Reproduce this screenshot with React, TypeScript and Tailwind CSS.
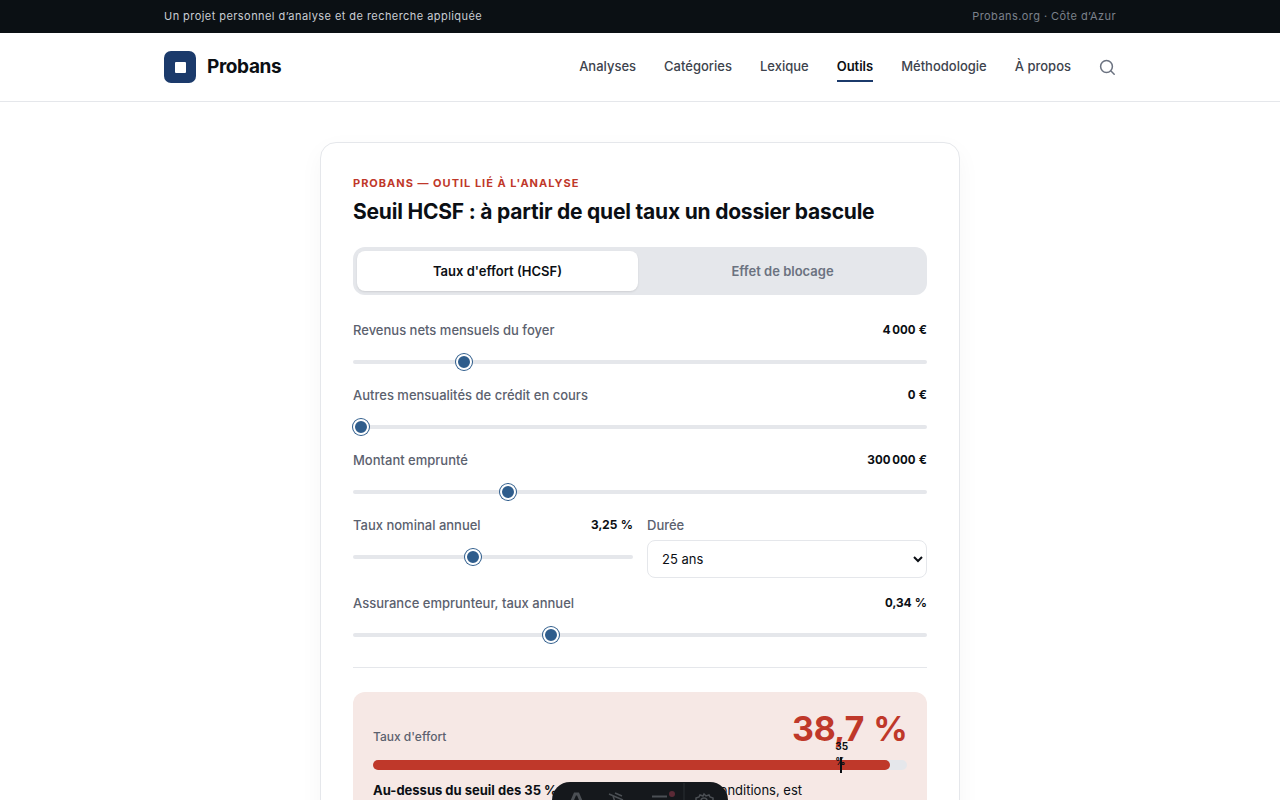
import { useState } from "react";

const NAV_LINKS = [
  { label: "Analyses", active: false },
  { label: "Catégories", active: false },
  { label: "Lexique", active: false },
  { label: "Outils", active: true },
  { label: "Méthodologie", active: false },
  { label: "À propos", active: false },
];

const RANGE_CLASS =
  "block h-5 w-full cursor-pointer appearance-none bg-transparent " +
  "[&::-webkit-slider-runnable-track]:h-1 [&::-webkit-slider-runnable-track]:rounded-full [&::-webkit-slider-runnable-track]:bg-[#e5e7eb] " +
  "[&::-webkit-slider-thumb]:-mt-[6px] [&::-webkit-slider-thumb]:size-4 [&::-webkit-slider-thumb]:appearance-none [&::-webkit-slider-thumb]:rounded-full [&::-webkit-slider-thumb]:border-2 [&::-webkit-slider-thumb]:border-white [&::-webkit-slider-thumb]:bg-[#2f5d8c] [&::-webkit-slider-thumb]:shadow-[0_0_0_1px_#2f5d8c]";

function formatEuros(value: number) {
  return `${String(value).replace(/\B(?=(\d{3})+$)/g, "\u202f")}\u00a0€`;
}

function formatPercent(value: number) {
  return `${value.toFixed(2).replace(".", ",")} %`;
}

type SliderFieldProps = {
  id: string;
  label: string;
  min: number;
  max: number;
  step: number;
  initial: number;
  format: (value: number) => string;
};

function SliderField({ id, label, min, max, step, initial, format }: SliderFieldProps) {
  const [value, setValue] = useState(initial);
  return (
    <div>
      <div className="mb-3 flex h-5 items-center justify-between leading-5">
        <label htmlFor={id} className="text-[13px] font-medium text-[#5b616e]">
          {label}
        </label>
        <output htmlFor={id} className="text-[12px] font-bold text-[#0b0f14] tabular-nums">
          {format(value)}
        </output>
      </div>
      <input
        id={id}
        type="range"
        min={min}
        max={max}
        step={step}
        value={value}
        onChange={(event) => setValue(Number(event.target.value))}
        className={RANGE_CLASS}
      />
    </div>
  );
}

function TopBar() {
  return (
    <div className="bg-[#0b1014] text-[11px] tracking-[0.04em]">
      <div className="mx-auto flex h-[33px] max-w-[1000px] items-center justify-between px-6">
        <span className="text-[#c9cdd3]">Un projet personnel d’analyse et de recherche appliquée</span>
        <span className="text-[#7b818b]">Probans.org · Côte d’Azur</span>
      </div>
    </div>
  );
}

function Header() {
  return (
    <header className="border-b border-[#e5e7eb] bg-white">
      <div className="mx-auto flex h-[68px] max-w-[1000px] items-center justify-between px-6">
        <a href="#" className="flex items-center gap-[11px]">
          <span className="flex size-8 items-center justify-center rounded-[7px] bg-[#1b3a6b]">
            <span className="size-[11px] rounded-[1px] bg-white" />
          </span>
          <span className="text-[19px] font-bold tracking-[-0.02em] text-[#0b0f14]">Probans</span>
        </a>
        <nav className="flex items-center gap-7 text-[13px]">
          {NAV_LINKS.map(({ label, active }) => (
            <a
              key={label}
              href="#"
              className={
                active
                  ? "border-b-2 border-[#1b3a6b] pt-[5px] pb-[3px] font-semibold text-[#0b0f14]"
                  : "border-b-2 border-transparent pt-[5px] pb-[3px] font-medium text-[#3d434d]"
              }
            >
              {label}
            </a>
          ))}
          <button type="button" aria-label="Rechercher" className="text-[#6b7280]">
            <svg width="17" height="17" viewBox="0 0 17 17" fill="none" stroke="currentColor" strokeWidth="1.5" strokeLinecap="round">
              <circle cx="7.5" cy="7.5" r="5.9" />
              <path d="M12 12l3.2 3.2" />
            </svg>
          </button>
        </nav>
      </div>
    </header>
  );
}

function ModeTabs() {
  const [mode, setMode] = useState("effort");
  const tabs = [
    { id: "effort", label: "Taux d'effort (HCSF)" },
    { id: "blocage", label: "Effet de blocage" },
  ];
  return (
    <div role="tablist" className="mt-[22px] flex gap-1 rounded-xl bg-[#e5e7eb] p-1">
      {tabs.map(({ id, label }) => (
        <button
          key={id}
          type="button"
          role="tab"
          aria-selected={mode === id}
          onClick={() => setMode(id)}
          className={
            mode === id
              ? "h-10 flex-1 rounded-lg bg-white pt-0.5 text-[13px] font-semibold text-[#0b0f14] shadow-[0_1px_2px_rgba(0,0,0,0.1)]"
              : "h-10 flex-1 rounded-lg pt-0.5 text-[13px] font-semibold text-[#6b7280]"
          }
        >
          {label}
        </button>
      ))}
    </div>
  );
}

function EffortResult() {
  return (
    <section className="mt-6 rounded-xl bg-[#f6e8e5] px-5 pt-4 pb-5">
      <div className="flex items-baseline justify-between">
        <span className="text-[12px] font-medium text-[#5b616e]">Taux d'effort</span>
        <span className="text-[34px] leading-[42px] font-bold tracking-[-0.02em] text-[#bf382a] tabular-nums">38,7 %</span>
      </div>
      <div className="relative mt-[10px] h-[10px] rounded-full bg-[#e5e7eb]">
        <div className="h-full rounded-full bg-[#bf382a]" style={{ width: "96.75%" }} />
        <div className="absolute -top-[3px] left-[87.5%] h-4 w-[2px] bg-[#0b0f14]">
          <span className="absolute -top-[18px] -left-[5px] w-3 text-[10px] leading-[15px] font-bold text-[#0b0f14]">
            35 %
          </span>
        </div>
      </div>
      <p className="mt-[10px] text-[13px] leading-5 text-[#0b0f14]">
        <strong className="font-bold">Au-dessus du seuil des 35 %.</strong> Votre dossier, dans ces conditions, est
      </p>
    </section>
  );
}

function FloatingToolbar() {
  return (
    <div className="fixed bottom-0 left-1/2 h-[18px] w-44 -translate-x-1/2 overflow-hidden rounded-t-[20px] bg-[#15181c]">
      <svg width="176" height="18" viewBox="0 0 176 18" fill="none" stroke="#4b4f54" strokeWidth="1.5">
        <path d="M20 19l3-7h3l3 7" strokeWidth="3" />
        <path d="M57 12l14 6M63 11l7 3M61 14l2 6" />
        <path d="M100 14.500h15" strokeWidth="2" />
        <circle cx="120" cy="12" r="3" fill="#5b2a36" stroke="none" />
        <path d="M132 1v17" stroke="#2b2f33" strokeWidth="1" />
        <path d="M144 19v-3l3-1 1-2 3 1 1-2 2 2 3-1 1 2 3 1v3" />
        <path d="M149 19a3 3 0 0 1 6 0" />
      </svg>
    </div>
  );
}

export default function App() {
  return (
    <div className="min-h-screen bg-white font-[Inter,sans-serif] text-[#0b0f14]">
      <TopBar />
      <Header />
      <main className="px-6 pt-10 pb-10">
        <article className="mx-auto max-w-[640px] rounded-2xl border border-[#e5e7eb] bg-white px-8 pt-8 pb-8 shadow-[0_8px_24px_rgba(11,15,20,0.04)]">
          <p className="text-[11px] leading-4 font-bold tracking-[1px] text-[#bf382a] uppercase">
            Probans — Outil lié à l'analyse
          </p>
          <h1 className="mt-2 text-[21px] leading-[26px] font-bold tracking-[-0.01em]">
            Seuil HCSF : à partir de quel taux un dossier bascule
          </h1>
          <ModeTabs />
          <div className="mt-[25px] grid gap-[13px]">
            <SliderField id="revenus" label="Revenus nets mensuels du foyer" min={1500} max={15000} step={100} initial={4000} format={formatEuros} />
            <SliderField id="mensualites" label="Autres mensualités de crédit en cours" min={0} max={3000} step={50} initial={0} format={formatEuros} />
            <SliderField id="montant" label="Montant emprunté" min={50000} max={1000000} step={5000} initial={300000} format={formatEuros} />
            <div className="grid grid-cols-2 gap-[14px] pb-0.5">
              <SliderField id="taux" label="Taux nominal annuel" min={0.5} max={7} step={0.05} initial={3.25} format={formatPercent} />
              <div>
                <label htmlFor="duree" className="mb-[5px] block text-[13px] leading-5 font-medium text-[#5b616e]">
                  Durée
                </label>
                <select
                  id="duree"
                  defaultValue="25"
                  className="block h-[38px] w-full rounded-lg border border-[#e5e7eb] bg-white pl-[10px] text-[13px] text-[#0b0f14]"
                >
                  <option value="15">15 ans</option>
                  <option value="20">20 ans</option>
                  <option value="25">25 ans</option>
                </select>
              </div>
            </div>
            <SliderField id="assurance" label="Assurance emprunteur, taux annuel" min={0} max={1} step={0.01} initial={0.34} format={formatPercent} />
          </div>
          <hr className="mt-[22px] border-[#e5e7eb]" />
          <EffortResult />
        </article>
      </main>
      <FloatingToolbar />
    </div>
  );
}
